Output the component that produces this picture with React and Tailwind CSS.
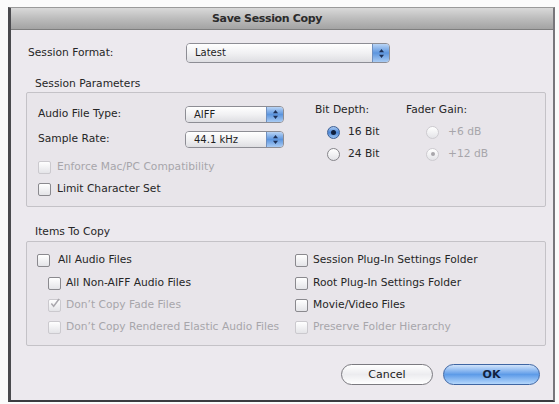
import React from "react";

const font = { fontFamily: '"DejaVu Sans", "Liberation Sans", sans-serif' };

function Arrows() {
  return (
    <svg width="7" height="11" viewBox="0 0 7 11">
      <path d="M3.5 1 L6 4.2 L1 4.2 Z" fill="#1d2f55" />
      <path d="M3.5 10 L6 6.8 L1 6.8 Z" fill="#1d2f55" />
    </svg>
  );
}

function Popup({ className, label }) {
  return (
    <div className={`flex rounded-[4px] border border-[#8d8d94] overflow-hidden ${className}`}>
      <div className="flex-1 flex items-center pl-[8px] bg-gradient-to-b from-[#ffffff] via-[#f1f1f3] to-[#dedee2] text-[#1e1e1e] text-[10px]">
        {label}
      </div>
      <div className="w-[17px] flex items-center justify-center border-l border-[#6f8fbf] bg-gradient-to-b from-[#b9d4f5] via-[#5c95de] to-[#a9cbf3]">
        <Arrows />
      </div>
    </div>
  );
}

function Check({ checked, disabled }) {
  return (
    <div
      className={`w-[13px] h-[13px] shrink-0 rounded-[2px] border flex items-center justify-center bg-gradient-to-b from-[#ffffff] to-[#e4e4e8] ${
        disabled ? "border-[#cbc9ce]" : "border-[#8a898e]"
      }`}
    >
      {checked && (
        <svg width="11" height="11" viewBox="0 0 11 11" className="-mt-[3px] ml-[1px]">
          <path d="M1.5 5.5 L4 8.5 L10 0.5" fill="none" stroke={disabled ? "#a9a7ad" : "#222"} strokeWidth="1.6" />
        </svg>
      )}
    </div>
  );
}

function CheckRow({ label, checked, disabled, gap = "gap-[7px]", className = "" }) {
  return (
    <div className={`flex items-center h-[16px] ${gap} ${className}`}>
      <Check checked={checked} disabled={disabled} />
      <span className={disabled ? "text-[#a7a5aa]" : "text-[#262626]"}>{label}</span>
    </div>
  );
}

function Radio({ checked, disabled }) {
  if (checked && !disabled) {
    return (
      <div className="w-[13px] h-[13px] shrink-0 rounded-full border border-[#3d5f94] bg-gradient-to-b from-[#a9c9f2] via-[#4d87d6] to-[#9cc3f0] flex items-center justify-center">
        <div className="w-[5px] h-[5px] rounded-full bg-[#10203e]" />
      </div>
    );
  }
  return (
    <div
      className={`w-[13px] h-[13px] shrink-0 rounded-full border bg-gradient-to-b from-[#ffffff] to-[#e4e4e8] flex items-center justify-center ${
        disabled ? "border-[#cdcbd0]" : "border-[#86858a]"
      }`}
    >
      {checked && <div className="w-[4px] h-[4px] rounded-full bg-[#a8a6ab]" />}
    </div>
  );
}

function RadioRow({ label, checked, disabled, gap }) {
  return (
    <div className={`flex items-center h-[14px] ${gap}`}>
      <Radio checked={checked} disabled={disabled} />
      <span className={disabled ? "text-[#a7a5aa]" : "text-[#262626]"}>{label}</span>
    </div>
  );
}

export default function App() {
  return (
    <div className="w-[559px] h-[404px] bg-[#fbfbfb] pt-[7px] pl-[8px] text-[10.7px] leading-none" style={font}>
      <div className="w-[547px] h-[395px] flex flex-col border-t border-t-[#9a9a9a] border-l-[3px] border-l-[#4a4a4e] border-r-[2px] border-r-[#77767b] border-b-[2px] border-b-[#3c3c40] bg-[#ece9ee]">
        {/* Title bar */}
        <div className="h-[22px] shrink-0 flex items-center justify-center pr-[30px] bg-gradient-to-b from-[#d9d9d9] via-[#bcbcbc] to-[#a3a3a3] border-b border-[#7e7e7e]">
          <span className="text-[11px] font-bold tracking-[-0.35px] text-[#2b2b2b]">Save Session Copy</span>
        </div>

        {/* Body */}
        <div className="flex-1 flex flex-col pl-[15px] pr-[7px] pt-[13px]">
          {/* Session format */}
          <div className="flex items-center h-[20px] pl-[2px]">
            <span className="w-[158px] text-[#262626]">Session Format:</span>
            <Popup className="w-[204px] h-[20px]" label="Latest" />
          </div>

          {/* Session Parameters */}
          <div className="mt-[16px] h-[13px] pl-[9px] text-[#262626]">Session Parameters</div>
          <div className="h-[115px] border border-[#c4c2c7] rounded-[2px] bg-[#e8e5ea] flex pl-[11px] pt-[13px]">
            <div className="w-[277px] flex flex-col">
              <div className="flex items-center h-[17px]">
                <span className="w-[147px] text-[#262626]">Audio File Type:</span>
                <Popup className="w-[99px] h-[17px]" label="AIFF" />
              </div>
              <div className="flex items-center h-[17px] mt-[8px]">
                <span className="w-[147px] text-[#262626]">Sample Rate:</span>
                <Popup className="w-[99px] h-[17px]" label="44.1 kHz" />
              </div>
              <CheckRow className="mt-[11px]" label="Enforce Mac/PC Compatibility" disabled gap="gap-[6px]" />
              <CheckRow className="mt-[6px]" label="Limit Character Set" gap="gap-[6px]" />
            </div>
            <div className="w-[91px] flex flex-col">
              <div className="h-[12px] text-[#262626] mt-[-1px]">Bit Depth:</div>
              <div className="flex flex-col gap-[8px] mt-[8px] pl-[12px]">
                <RadioRow label="16 Bit" checked gap="gap-[8px]" />
                <RadioRow label="24 Bit" gap="gap-[8px]" />
              </div>
            </div>
            <div className="flex flex-col">
              <div className="h-[12px] text-[#262626] mt-[-1px]">Fader Gain:</div>
              <div className="flex flex-col gap-[8px] mt-[8px] pl-[20px]">
                <RadioRow label="+6 dB" disabled gap="gap-[9px]" />
                <RadioRow label="+12 dB" checked disabled gap="gap-[9px]" />
              </div>
            </div>
          </div>

          {/* Items To Copy */}
          <div className="mt-[20px] h-[14px] pl-[9px] text-[#262626]">Items To Copy</div>
          <div className="h-[105px] border border-[#c4c2c7] rounded-[2px] bg-[#e8e5ea] flex pt-[10px]">
            <div className="w-[268px] flex flex-col pl-[10px]">
              <CheckRow label="All Audio Files" gap="gap-[8px]" />
              <div className="flex flex-col pl-[11px]">
                <CheckRow className="mt-[7px]" label="All Non-AIFF Audio Files" gap="gap-[5px]" />
                <CheckRow className="mt-[6px]" label="Don’t Copy Fade Files" checked disabled gap="gap-[5px]" />
                <CheckRow className="mt-[6px]" label="Don’t Copy Rendered Elastic Audio Files" disabled gap="gap-[5px]" />
              </div>
            </div>
            <div className="flex flex-col">
              <CheckRow label="Session Plug-In Settings Folder" gap="gap-[5px]" />
              <CheckRow className="mt-[7px]" label="Root Plug-In Settings Folder" gap="gap-[5px]" />
              <CheckRow className="mt-[6px]" label="Movie/Video Files" gap="gap-[5px]" />
              <CheckRow className="mt-[6px]" label="Preserve Folder Hierarchy" disabled gap="gap-[5px]" />
            </div>
          </div>

          {/* Buttons */}
          <div className="flex justify-end gap-[10px] mt-[18px] pr-[6px]">
            <button className="w-[92px] h-[21px] rounded-full border border-[#7b7a80] bg-gradient-to-b from-[#ffffff] via-[#ececef] to-[#ffffff] text-[11px] text-[#222] flex items-center justify-center">
              Cancel
            </button>
            <button className="w-[97px] h-[21px] rounded-full border border-[#3f66a3] bg-gradient-to-b from-[#d2e4fa] via-[#5d9be8] to-[#b5d7fb] text-[11px] font-bold text-[#13233f] flex items-center justify-center">
              OK
            </button>
          </div>
        </div>
      </div>
    </div>
  );
}
